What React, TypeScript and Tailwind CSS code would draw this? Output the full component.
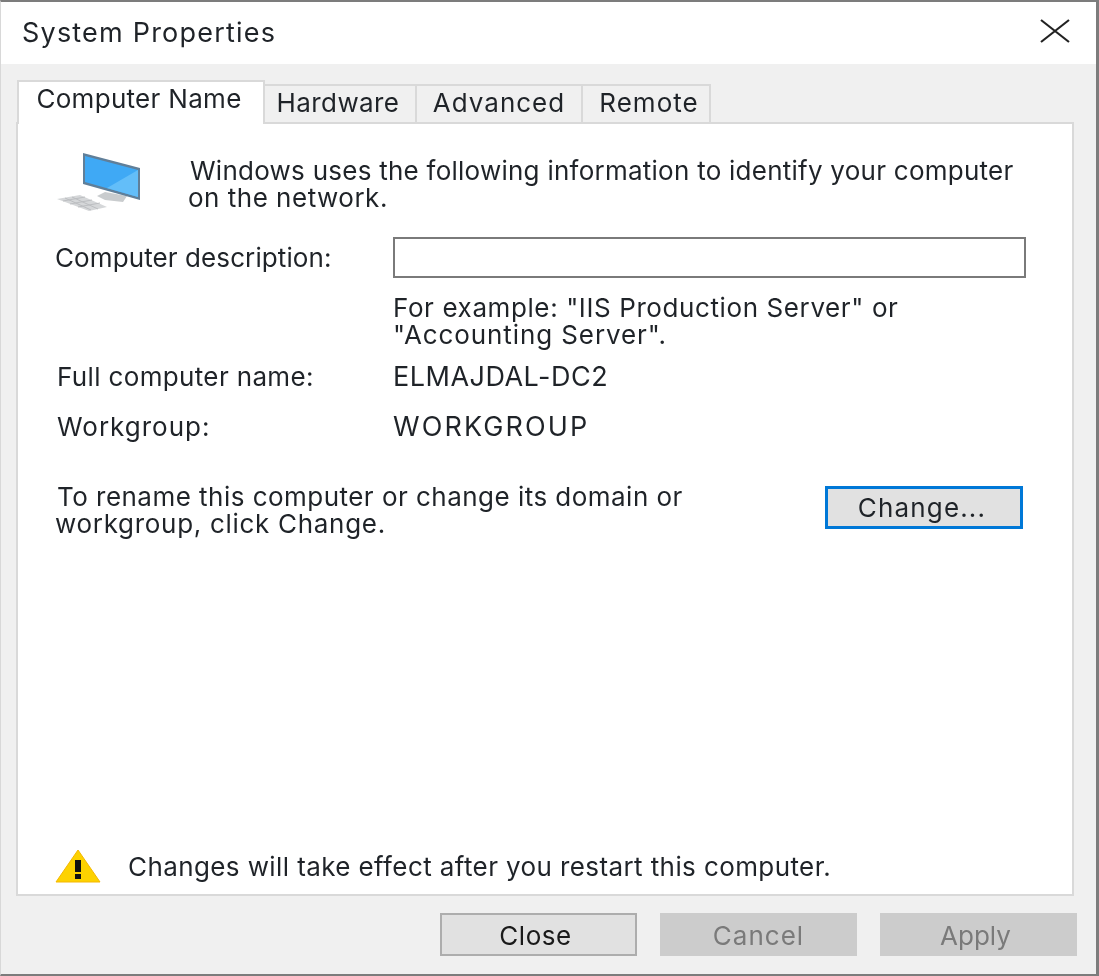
const font = "font-['Inter',sans-serif]";

function ComputerIcon() {
  return (
    <svg width="90" height="60" viewBox="0 0 90 60" className="-mt-[5px] shrink-0 blur-[0.6px]">
      <path d="M42 44 L50 40 L72 44 L68 50 L50 48 Z" fill="#c9ccce" />
      <path d="M28 1 L85 16 L85 48 L28 32 Z" fill="#607f99" />
      <path d="M30 4 L83 18 L83 45 L30 30 Z" fill="#3fa9f5" />
      <path d="M83 18 L83 45 L52 36 Z" fill="#63bef9" />
      <path d="M2 47 L25 43 L52 55 L34 59 Z" fill="#d5d7d9" />
      <path d="M10 46 L36 58 M17 45 L43 57 M8 49 L30 45 M15 52 L37 48 M23 55 L45 51" stroke="#bcbec1" strokeWidth="1" />
    </svg>
  );
}

function WarningIcon() {
  return (
    <svg width="46" height="34" viewBox="0 0 46 34" className="shrink-0">
      <path d="M23 1 L45 33 L1 33 Z" fill="#fdd200" stroke="#f5b800" strokeWidth="1" strokeLinejoin="round" />
      <rect x="20" y="11" width="6" height="12" fill="#111" />
      <rect x="20" y="25" width="6" height="5" fill="#111" />
    </svg>
  );
}

function Tab({ label, active, className }: { label: string; active?: boolean; className: string }) {
  return (
    <div
      className={`flex justify-center border-[#d9d9d9] border-t-2 border-r-2 pt-[3px] ${
        active ? "z-10 -mb-0.5 h-[44px] border-l-2 bg-white" : "h-[38px] bg-[#f0f0f0]"
      } ${className}`}
    >
      {label}
    </div>
  );
}

function FooterButton({ label, disabled, className }: { label: string; disabled?: boolean; className: string }) {
  return (
    <div
      className={`flex h-[43px] w-[197px] items-center justify-center border-2 pt-0.5 ${
        disabled ? "border-[#cccccc] bg-[#cccccc] text-[#7a7a7a]" : "border-[#adadad] bg-[#e1e1e1] text-[#1a1a1a]"
      } ${className}`}
    >
      {label}
    </div>
  );
}

export default function App() {
  return (
    <div className={`flex h-[976px] w-[1099px] flex-col border-t-2 border-r-[3px] border-b-2 border-l border-[#7c7c7c] border-l-[#d8d8d8] bg-[#f0f0f0] text-[26px] leading-[27px] text-[#1f2328] blur-[0.5px] ${font}`}>
      <div className="flex h-[62px] items-center justify-between bg-white pr-[26px] pl-[21px]">
        <span className="pb-0.5 text-[27px] tracking-[1.2px]">System Properties</span>
        <svg width="30" height="24" viewBox="0 0 30 24" className="mb-1" fill="none" stroke="#222" strokeWidth="2.2">
          <path d="M1 1 L29 23 M29 1 L1 23" />
        </svg>
      </div>

      <div className="flex h-[58px] items-end pl-4">
        <Tab label="Computer Name" active className="w-[248px] pr-1 tracking-[0.3px]" />
        <Tab label="Hardware" className="w-[152px] pr-1 tracking-[0.4px]" />
        <Tab label="Advanced" className="w-[166px] tracking-[1px]" />
        <Tab label="Remote" className="w-[128px] pl-1.5 tracking-[1px]" />
      </div>

      <div className="ml-[15px] flex h-[774px] w-[1058px] flex-col border-2 border-[#d9d9d9] bg-white pt-[33px] pr-[46px] pl-[37px]">
        <div className="flex">
          <ComputerIcon />
          <p>
            <span className="ml-[45px] tracking-[0.25px]">Windows uses the following information to identify your computer</span>
            <br />
            <span className="ml-[43px] tracking-[0.5px]">on the network.</span>
          </p>
        </div>

        <div className="mt-[25px] grid grid-cols-[338px_1fr] items-center">
          <span className="tracking-[0.1px]">Computer description:</span>
          <div className="h-[41px] border-2 border-[#7a7a7a] bg-white" />
        </div>

        <p className="mt-4 ml-[338px]">
          <span className="tracking-[0.6px]">For example: "IIS Production Server" or</span>
          <br />
          <span className="tracking-[0.9px]">"Accounting Server".</span>
        </p>

        <div className="mt-[15px] grid grid-cols-[336px_1fr] gap-y-[23px] pl-0.5">
          <span className="tracking-[0.35px]">Full computer name:</span>
          <span className="text-[27px] tracking-[0.5px]">ELMAJDAL-DC2</span>
          <span className="tracking-[1px]">Workgroup:</span>
          <span className="text-[27px] tracking-[2.1px]">WORKGROUP</span>
        </div>

        <div className="mt-[17px] flex items-start justify-between pl-0.5">
          <p className="mt-[26px]">
            <span className="tracking-[0.47px]">To rename this computer or change its domain or</span>
            <br />
            <span className="-ml-0.5 tracking-[0.7px]">workgroup, click Change.</span>
          </p>
          <div className="mt-[29px] mr-[3px] flex h-[43px] w-[198px] items-center justify-center border-[3px] border-[#0078d7] bg-[#e1e1e1] pr-1 tracking-[1.15px]">
            Change...
          </div>
        </div>

        <div className="mt-auto mb-[11px] flex items-center gap-[27px]">
          <WarningIcon />
          <span className="tracking-[0.4px]">Changes will take effect after you restart this computer.</span>
        </div>
      </div>

      <div className="mt-[17px] flex justify-end gap-[23px] pr-[19px]">
        <FooterButton label="Close" className="pr-1.5 tracking-[0.5px]" />
        <FooterButton label="Cancel" disabled className="tracking-[1px]" />
        <FooterButton label="Apply" disabled className="pr-1.5" />
      </div>
    </div>
  );
}
